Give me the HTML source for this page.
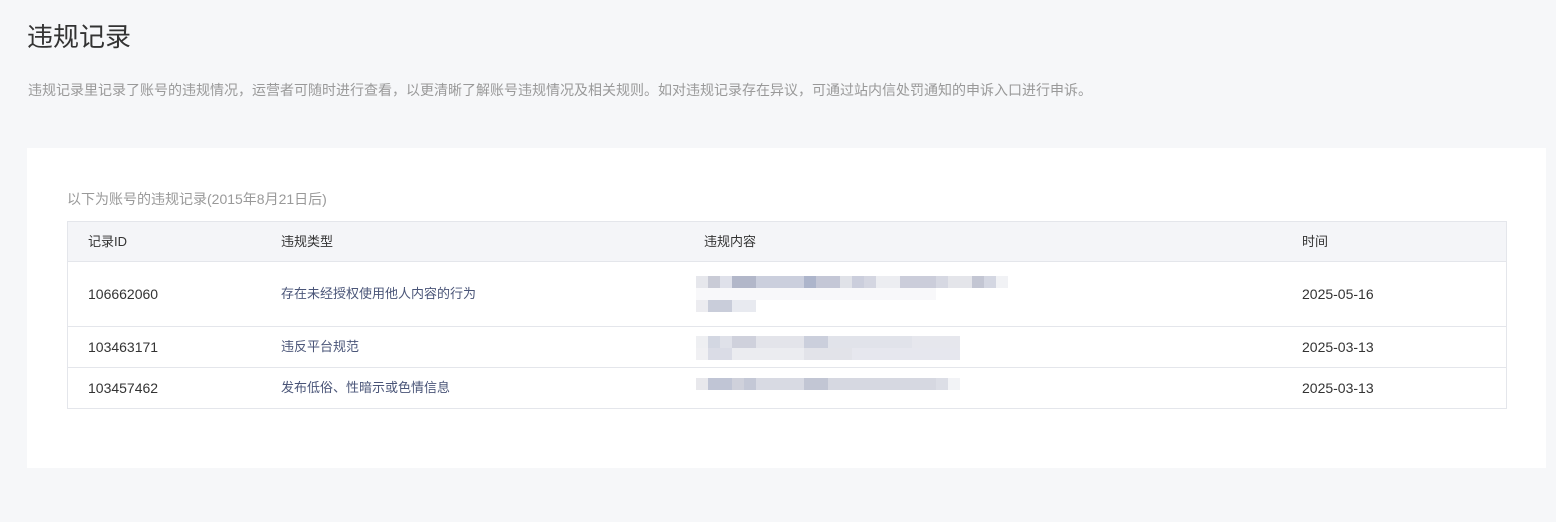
<!DOCTYPE html>
<html><head><meta charset="utf-8"><style>
*{margin:0;padding:0;box-sizing:border-box}
body{width:1556px;height:522px;background:#f6f7f9;font-family:"Liberation Sans","Noto Sans CJK SC",sans-serif;position:relative;overflow:hidden}
.a{position:absolute;white-space:nowrap;line-height:20px}
.m{position:absolute;height:12px}
</style></head><body>
<div class="a" style="left:27px;top:24px;font-size:26px;line-height:26px;color:#333">违规记录</div>
<div class="a" style="left:28px;top:80px;font-size:14px;color:#999">违规记录里记录了账号的违规情况，运营者可随时进行查看，以更清晰了解账号违规情况及相关规则。如对违规记录存在异议，可通过站内信处罚通知的申诉入口进行申诉。</div>
<div class="a" style="left:27px;top:148px;width:1519px;height:320px;background:#fff"></div>
<div class="a" style="left:67px;top:189px;font-size:14px;color:#999">以下为账号的违规记录(2015年8月21日后)</div>
<div class="a" style="left:67px;top:221px;width:1440px;height:188px;border:1px solid #e4e6eb"></div>
<div class="a" style="left:68px;top:222px;width:1438px;height:40px;background:#f4f5f8;border-bottom:1px solid #e4e6eb"></div>
<div class="a" style="left:68px;top:326px;width:1438px;height:1px;background:#e4e6eb"></div>
<div class="a" style="left:68px;top:367px;width:1438px;height:1px;background:#e4e6eb"></div>
<div class="a" style="left:88px;top:232px;font-size:13px;color:#333">记录ID</div>
<div class="a" style="left:281px;top:232px;font-size:13px;color:#333">违规类型</div>
<div class="a" style="left:704px;top:232px;font-size:13px;color:#333">违规内容</div>
<div class="a" style="left:1302px;top:232px;font-size:13px;color:#333">时间</div>
<div class="a" style="left:88px;top:284px;font-size:14px;color:#333">106662060</div>
<div class="a" style="left:281px;top:284px;font-size:13px;color:#4a5578">存在未经授权使用他人内容的行为</div>
<div class="a" style="left:1302px;top:284px;font-size:14px;color:#333">2025-05-16</div>
<div class="a" style="left:88px;top:337px;font-size:14px;color:#333">103463171</div>
<div class="a" style="left:281px;top:337px;font-size:13px;color:#4a5578">违反平台规范</div>
<div class="a" style="left:1302px;top:337px;font-size:14px;color:#333">2025-03-13</div>
<div class="a" style="left:88px;top:378px;font-size:14px;color:#333">103457462</div>
<div class="a" style="left:281px;top:378px;font-size:13px;color:#4a5578">发布低俗、性暗示或色情信息</div>
<div class="a" style="left:1302px;top:378px;font-size:14px;color:#333">2025-03-13</div>
<div class="m" style="left:696px;top:276px;width:312px;background:linear-gradient(90deg,#e6e7ec 0 12px,#c9cbd6 12px 24px,#dfe1ea 24px 36px,#b2b7c9 36px 60px,#cbcfdd 60px 108px,#adb5cb 108px 120px,#c4c7d6 120px 144px,#e0e2e8 144px 156px,#cbcedc 156px 168px,#d4d6e1 168px 180px,#ecedf1 180px 204px,#cbcdda 204px 240px,#d6d8e2 240px 252px,#e4e5ea 252px 276px,#c3c6d3 276px 288px,#d4d7e2 288px 300px,#f1f2f5 300px)"></div>
<div class="m" style="left:696px;top:288px;width:240px;background:#f8f8fa"></div>
<div class="m" style="left:696px;top:300px;width:60px;background:linear-gradient(90deg,#ececf0 0 12px,#c9cdda 12px 36px,#e8eaf0 36px)"></div>
<div class="m" style="left:696px;top:336px;width:264px;background:linear-gradient(90deg,#eeeff2 0 12px,#d3d7e2 12px 24px,#dfe1e9 24px 36px,#cfd1dc 36px 60px,#e3e4ea 60px 108px,#cbcfdc 108px 132px,#e1e3ea 132px 216px,#e6e7ed 216px)"></div>
<div class="m" style="left:696px;top:348px;width:264px;background:linear-gradient(90deg,#f0f0f3 0 12px,#dadce6 12px 36px,#ebecf0 36px 108px,#e2e3e9 108px 156px,#e6e7ee 156px 264px)"></div>
<div class="m" style="left:696px;top:378px;width:264px;background:linear-gradient(90deg,#e8e8ec 0 12px,#c0c5d5 12px 36px,#cfd1db 36px 48px,#c4c8d6 48px 60px,#d8dae3 60px 108px,#c2c6d4 108px 132px,#d6d8e1 132px 240px,#dcdee6 240px 252px,#f2f3f6 252px)"></div>
</body></html>
